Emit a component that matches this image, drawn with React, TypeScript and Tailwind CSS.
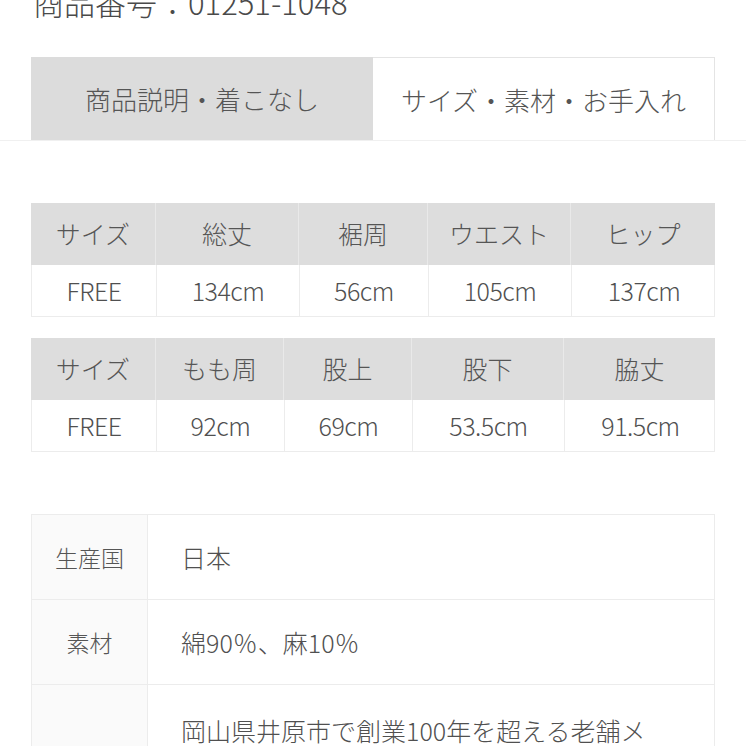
const FONT = { fontFamily: '"Noto Sans CJK JP", "Noto Sans", sans-serif' };

const sizeTables = [
  {
    cols: ['124px', '143px', '129px', '143px', '145px'],
    head: ['サイズ', '総丈', '裾周', 'ウエスト', 'ヒップ'],
    row: ['FREE', '134cm', '56cm', '105cm', '137cm'],
  },
  {
    cols: ['124px', '128px', '128px', '152px', '152px'],
    head: ['サイズ', 'もも周', '股上', '股下', '脇丈'],
    row: ['FREE', '92cm', '69cm', '53.5cm', '91.5cm'],
  },
];

const specs = [
  { label: '生産国', value: '日本', h: 'h-[84px]' },
  { label: '素材', value: '綿90％、麻10％', h: 'h-[85px]' },
  {
    label: '',
    value: '岡山県井原市で創業100年を超える老舗メーカーで丁寧に仕立てました。',
    h: 'h-[120px]',
  },
];

function SizeTable({ t, className }: { t: (typeof sizeTables)[number]; className?: string }) {
  const grid = { gridTemplateColumns: t.cols.join(' ') };
  return (
    <div className={`mx-[31px] w-[684px] ${className ?? ''}`}>
      <div className="grid h-[62px] bg-[#dddddd]" style={grid}>
        {t.head.map((h, i) => (
          <div
            key={h + i}
            className={`flex items-center justify-center text-[25px] font-light text-[#555] ${i > 0 ? 'border-l border-[#e9e9e9]' : ''}`}
          >
            {h}
          </div>
        ))}
      </div>
      <div className="grid h-[52px] bg-white border-b border-x border-[#ececec]" style={grid}>
        {t.row.map((v, i) => (
          <div
            key={v + i}
            className={`flex items-center justify-center text-[25px] font-light tracking-[-0.5px] text-[#505050] ${i > 0 ? 'border-l border-[#ececec]' : ''}`}
          >
            {v}
          </div>
        ))}
      </div>
    </div>
  );
}

export default function App() {
  return (
    <div className="h-[746px] overflow-hidden bg-white" style={FONT}>
      <h1 className="mt-[-13px] pl-[33px] text-[31px] font-light leading-[30px] text-[#4a4a4a]">
        商品番号：01251-1048
      </h1>

      <div className="mt-[40px] border-b border-[#f0f0f0]">
        <div className="mx-[31px] grid h-[83px] grid-cols-2">
          <div className="flex items-center justify-center bg-[#dcdcdc] text-[26px] font-light text-[#555]">
            商品説明・着こなし
          </div>
          <div className="flex items-center justify-center border-t border-r border-[#e4e4e4] bg-white text-[26px] font-light text-[#555]">
            サイズ・素材・お手入れ
          </div>
        </div>
      </div>

      <SizeTable t={sizeTables[0]} className="mt-[62px]" />
      <SizeTable t={sizeTables[1]} className="mt-[21px]" />

      <div className="mx-[31px] mt-[62px] w-[684px] border border-b-0 border-[#ececec]">
        {specs.map((s, i) => (
          <div key={i} className={`flex ${s.h} ${i > 0 ? 'border-t border-[#ececec]' : ''}`}>
            <div className="flex w-[116px] shrink-0 items-center justify-center border-r border-[#ececec] bg-[#fafafa] text-[23px] font-light text-[#555]">
              {s.label}
            </div>
            <div
              className={`flex-1 pl-[33px] pr-[50px] text-[25px] font-light leading-[38px] text-[#505050] ${i < 2 ? 'flex items-center' : 'pt-[26px]'}`}
            >
              {s.value}
            </div>
          </div>
        ))}
      </div>
    </div>
  );
}
